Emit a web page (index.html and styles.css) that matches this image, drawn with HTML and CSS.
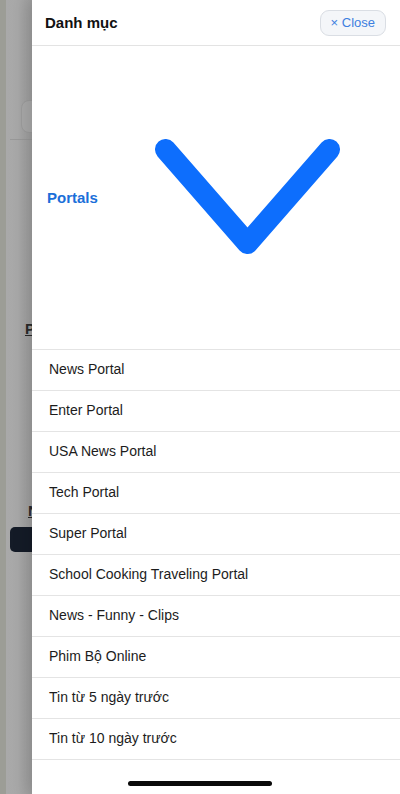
FILE: index.html
```html
<!DOCTYPE html>
<html>
<head>
  <title>Danh mục</title>
  <meta name="viewport" content="width=device-width, initial-scale=1">
  <link rel="stylesheet" href="styles.css">
</head>
<body>
  <!-- Page behind the drawer (dimmed) -->
  <div class="page">
    <div class="page-top">
      <div class="page-search"></div>
    </div>
    <hr class="page-rule">
    <h3 class="page-heading first">Portals</h3>
    <h3 class="page-heading second">News</h3>
    <div class="page-button"></div>
  </div>

  <!-- Category drawer -->
  <div class="drawer">
    <div class="drawer-header">
      <span class="drawer-title">Danh mục</span>
      <button class="close-btn">× Close</button>
    </div>

    <div class="group">
      <span class="group-label">Portals</span>
      <svg class="group-chevron" width="185" height="115" viewBox="0 0 185 115">
        <polyline points="10.5,10.5 92.5,104.5 174.5,10.5" fill="none" stroke="#0d6efd" stroke-width="21" stroke-linecap="round" stroke-linejoin="round"/>
      </svg>
    </div>

    <ul class="menu">
      <li>News Portal</li>
      <li>Enter Portal</li>
      <li>USA News Portal</li>
      <li>Tech Portal</li>
      <li>Super Portal</li>
      <li>School Cooking Traveling Portal</li>
      <li>News - Funny - Clips</li>
      <li>Phim Bộ Online</li>
      <li>Tin từ 5 ngày trước</li>
      <li>Tin từ 10 ngày trước</li>
    </ul>
  </div>

  <div class="home-bar"></div>
</body>
</html>
```

FILE: styles.css
```css
html, body {
  margin: 0;
  padding: 0;
}
body {
  width: 400px;
  height: 794px;
  overflow: hidden;
  position: relative;
  font-family: "Liberation Sans", Arial, sans-serif;
  background-color: #a8a8a8;
}

/* dimmed page underneath */
.page {
  height: 100%;
  border-left: 6px solid #9c9d96;
  padding-left: 4px;
  background: linear-gradient(to right, #a9a9a9 0, #a8a8a8 12px, #9e9e9e 26px);
}
.page-top {
  padding-top: 100px;
  padding-left: 11px;
}
.page-search {
  width: 60px;
  height: 31px;
  border: 1px solid #9c9c9c;
  border-radius: 8px;
  background-color: #a9a9a9;
}
.page-rule {
  margin: 6px 0 0 0;
  border: none;
  border-top: 1px solid #989898;
}
.page-heading {
  margin: 0;
  font-size: 15px;
  font-weight: bold;
  color: #2a2a2a;
  text-decoration: underline;
}
.page-heading.first {
  margin-top: 180px;
  padding-left: 15px;
}
.page-heading.second {
  margin-top: 165px;
  padding-left: 18px;
}
.page-button {
  margin-top: 8px;
  width: 80px;
  height: 25px;
  border-radius: 5px;
  background-color: #141b27;
}

/* drawer */
.drawer {
  position: absolute;
  top: 0;
  right: 0;
  bottom: 0;
  width: 368px;
  background-color: #fff;
  box-shadow: -6px 0 14px rgba(0,0,0,0.12);
  display: flex;
  flex-direction: column;
}
.drawer-header {
  height: 45px;
  border-bottom: 1px solid #e3e3e3;
  padding: 0 14px 0 13px;
  display: flex;
  align-items: center;
  justify-content: space-between;
}
.drawer-title {
  font-size: 15px;
  font-weight: bold;
  color: #111;
}
.close-btn {
  height: 26px;
  padding: 0 10px;
  margin-top: 0;
  font-family: "Liberation Sans", Arial, sans-serif;
  font-size: 13px;
  color: #3d7fe0;
  background-color: #f4f6f9;
  border: 1px solid #dadee4;
  border-radius: 9px;
}
.group {
  height: 303px;
  padding-left: 15px;
  display: flex;
  align-items: center;
  gap: 57px;
}
.group-label {
  font-size: 15px;
  font-weight: bold;
  color: #1b6fd9;
}
.group-chevron {
  flex-shrink: 0;
  margin-top: -2px;
}
.menu {
  list-style: none;
  margin: 0;
  padding: 0;
  border-top: 1px solid #e4e4e4;
}
.menu li {
  height: 40px;
  line-height: 39px;
  padding-left: 17px;
  font-size: 14px;
  color: #1c1c1c;
  border-bottom: 1px solid #e4e4e4;
}

.home-bar {
  position: absolute;
  left: 128px;
  bottom: 8px;
  width: 144px;
  height: 5px;
  border-radius: 3px;
  background-color: #0a0a0a;
}
```
